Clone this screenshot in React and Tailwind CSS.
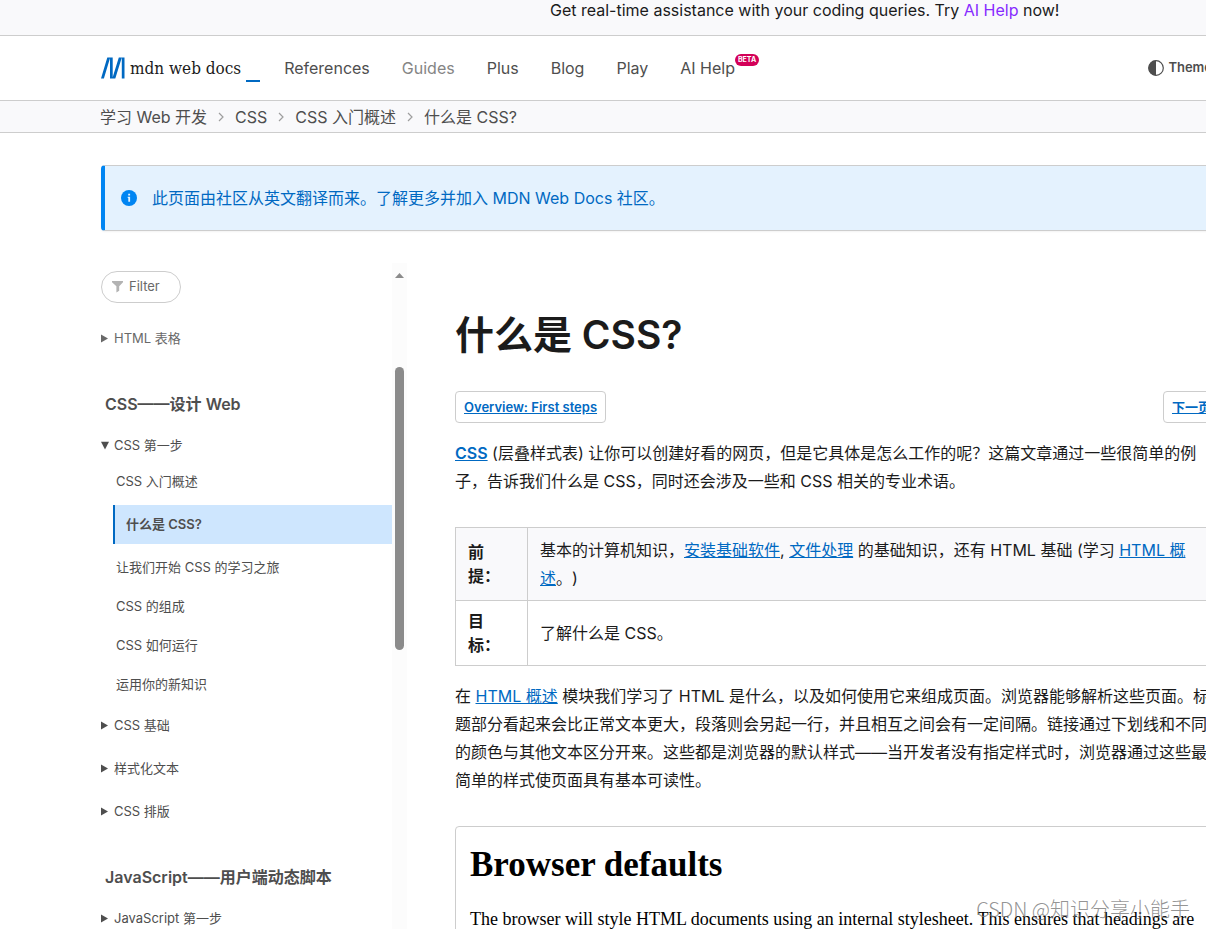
import React, { useState } from 'react';

const navItems = ['References', 'Guides', 'Plus', 'Blog', 'Play'];
const crumbs = ['学习 Web 开发', 'CSS', 'CSS 入门概述', '什么是 CSS?'];

const firstSteps = [
  'CSS 入门概述',
  '什么是 CSS?',
  '让我们开始 CSS 的学习之旅',
  'CSS 的组成',
  'CSS 如何运行',
  '运用你的新知识',
];

const Logo = () => (
  <a href="#home" className="flex items-center text-[#1b1b1b]" aria-label="MDN homepage">
    <svg width="24" height="22" viewBox="0 0 24 22" className="mr-[5px]" fill="#0069c2">
      <path d="M6.3.4h2.9L2.9 21.6H0zM9 .4h2.7v21.2H9zM17.8.4h3L14.3 21.6h-3zM20.8.4h2.7v21.2h-2.7z" />
    </svg>
    <span className="font-['DejaVu_Serif_Condensed','DejaVu_Serif',serif] text-[17px] leading-6">mdn web docs</span>
    <span className="ml-[5px] h-0.5 w-[14px] self-end bg-[#0069c2] translate-y-0.5"></span>
  </a>
);

const Caret = ({ open }) => (
  <svg width="9" height="9" viewBox="0 0 9 9" className="mr-1 shrink-0" fill="currentColor">
    {open ? <path d="M0 .8h8L4 8.6z" /> : <path d="M0 .5v8l7-4z" />}
  </svg>
);

const Section = ({ title, faded, defaultOpen = false, children }) => {
  const [open, setOpen] = useState(defaultOpen);

  return (
    <details open={open} onToggle={(e) => setOpen(e.currentTarget.open)}>
      <summary className={`flex h-[43px] cursor-pointer list-none items-center ${faded ? 'text-[#696969]' : ''}`}>
        <Caret open={open} />
        {title}
      </summary>
      {children}
    </details>
  );
};

const SideHeading = ({ children }) => (
  <h2 className="mt-8 mb-2 pl-1 text-base leading-6 font-semibold">{children}</h2>
);

const Sidebar = () => (
  <aside className="flex w-[306px] shrink-0 text-[13px] text-[#4e4e4e]">
    <div className="min-w-0 flex-1 pt-2">
      <label className="mb-3.5 flex h-8 w-20 items-center rounded-full border border-[#cdcdcd] pl-2.5">
        <svg width="12" height="12" viewBox="0 0 12 12" className="mr-[5px] shrink-0" fill="#b3b3b3" aria-hidden="true">
          <path d="M0 0h11v1.2L7.2 5.2v4.6L4.4 11.6V5.2L0 1.2z" />
        </svg>
        <input
          type="text"
          aria-label="Filter"
          placeholder="Filter"
          className="w-10 bg-transparent outline-none placeholder:text-[#696969]"
        />
      </label>

      <Section title="HTML 表格" faded />

      <SideHeading>CSS——设计 Web</SideHeading>
      <Section title="CSS 第一步" defaultOpen>
        <ul className="-mt-[5px] ml-3">
          {firstSteps.map((item, i) => (
            <li key={item}>
              <a
                href="#step"
                className={
                  i === 1
                    ? 'my-1 flex h-[39px] items-center border-l-2 border-[#0069c2] bg-[#cee6fe] pl-[11px] font-semibold'
                    : 'flex h-[39px] items-center pl-[3px]'
                }
              >
                {item}
              </a>
            </li>
          ))}
        </ul>
      </Section>
      <Section title="CSS 基础" />
      <Section title="样式化文本" />
      <Section title="CSS 排版" />

      <SideHeading>JavaScript——用户端动态脚本</SideHeading>
      <Section title="JavaScript 第一步" />
    </div>

    {/* scrollbar track */}
    <div className="flex w-[15px] flex-col items-center bg-[#fcfcfc] pt-2.5">
      <svg width="9" height="5" viewBox="0 0 9 5" fill="#8b8b8b">
        <path d="M0 5 4.5 0 9 5z" />
      </svg>
      <div className="mt-[89px] h-[283px] w-[9px] rounded-full bg-[#8b8b8b]"></div>
    </div>
  </aside>
);

const TextLink = ({ children }) => (
  <a href="#doc" className="text-[#0069c2] underline">{children}</a>
);

const PagerLink = ({ children }) => (
  <a
    href="#pager"
    className="flex h-8 items-center rounded border border-[#cdcdcd] px-2 text-[13px] font-semibold text-[#0069c2] underline"
  >
    {children}
  </a>
);

const Article = () => (
  <main className="-mr-3.5 ml-12 min-w-0 flex-1 pt-12 leading-7">
    <h1 className="mb-8 text-[39px] leading-12 font-semibold">什么是 CSS?</h1>

    <div className="mb-4 flex justify-between">
      <PagerLink>Overview: First steps</PagerLink>
      <PagerLink>下一页</PagerLink>
    </div>

    <p className="mb-8">
      <a href="#css" className="font-semibold text-[#0069c2] underline">CSS</a>{' '}
      (层叠样式表) 让你可以创建好看的网页，但是它具体是怎么工作的呢？这篇文章通过一些很简单的例子，告诉我们什么是 CSS，同时还会涉及一些和 CSS 相关的专业术语。
    </p>

    <table className="mb-4 w-full table-fixed border-collapse">
      <tbody>
        <tr className="bg-[#f9f9fb]">
          <th scope="row" className="w-[72px] border border-[#cdcdcd] px-3 py-2 text-left leading-6 font-semibold">
            前提：
          </th>
          <td className="border border-[#cdcdcd] px-3 py-2">
            基本的计算机知识，<TextLink>安装基础软件</TextLink>, <TextLink>文件处理</TextLink> 的基础知识，还有 HTML 基础 (学习{' '}
            <TextLink>HTML 概述</TextLink>。)
          </td>
        </tr>
        <tr>
          <th scope="row" className="border border-[#cdcdcd] px-3 py-2 text-left leading-6 font-semibold">
            目标：
          </th>
          <td className="border border-[#cdcdcd] px-3 py-2">了解什么是 CSS。</td>
        </tr>
      </tbody>
    </table>

    <p className="mb-8">
      在 <TextLink>HTML 概述</TextLink>{' '}
      模块我们学习了 HTML 是什么，以及如何使用它来组成页面。浏览器能够解析这些页面。标题部分看起来会比正常文本更大，段落则会另起一行，并且相互之间会有一定间隔。链接通过下划线和不同的颜色与其他文本区分开来。这些都是浏览器的默认样式——当开发者没有指定样式时，浏览器通过这些最简单的样式使页面具有基本可读性。
    </p>

    <div className="rounded border border-[#cdcdcd] px-[14px] py-4 font-['Liberation_Serif',serif] text-black">
      <h2 className="mb-5 text-[35px] leading-11 font-bold">Browser defaults</h2>
      <p className="text-lg leading-6">
        The browser will style HTML documents using an internal stylesheet. This ensures that headings are
      </p>
    </div>
  </main>
);

const App = () => {
  return (
    <div className="relative h-screen overflow-hidden bg-white font-['Inter','Noto_Sans_CJK_SC',sans-serif] text-base text-[#1b1b1b] [text-spacing-trim:space-all]">
      <div className="h-9 overflow-hidden border-b border-[#cdcdcd] bg-[#f9f9fb] pl-[550px] leading-5 whitespace-nowrap">
        Get real-time assistance with your coding queries. Try{' '}
        <a href="#ai" className="text-[#872bff]">AI Help</a> now!
      </div>

      <header className="flex h-[65px] items-center border-b border-[#cdcdcd] pl-[101px] text-[#4e4e4e]">
        <Logo />
        <nav className="ml-6 flex items-center gap-8">
          {navItems.map((item) => (
            <a key={item} href="#nav" className={item === 'Guides' ? 'text-[#858585]' : ''}>
              {item}
            </a>
          ))}
          <a href="#ai" className="relative">
            AI Help
            <span className="absolute -top-0.5 left-full flex h-3 items-center rounded-full bg-[#d30058] px-[3px] text-[7px] font-bold text-white">
              BETA
            </span>
          </a>
        </nav>
        <button type="button" className="-mr-1.5 ml-auto flex shrink-0 items-center gap-1 text-[13px] font-semibold">
          <svg width="16" height="16" viewBox="0 0 16 16">
            <circle cx="8" cy="8" r="7.3" fill="none" stroke="currentColor" strokeWidth="1.2" />
            <path d="M8 .5a7.5 7.5 0 0 0 0 15z" fill="currentColor" />
          </svg>
          Theme
        </button>
      </header>

      <nav className="h-8 border-b border-[#cdcdcd] bg-[#f9f9fb] pl-[100px] text-[#4e4e4e]" aria-label="Breadcrumb">
        <ol className="flex h-full items-center">
          {crumbs.map((crumb, i) => (
            <li key={crumb} className="flex items-center">
              {i > 0 && (
                <svg width="6" height="10" viewBox="0 0 6 10" className="mx-[11px]" fill="none" stroke="#9e9e9e" strokeWidth="1.2">
                  <path d="m1 1 4 4-4 4" />
                </svg>
              )}
              <a href="#crumb">{crumb}</a>
            </li>
          ))}
        </ol>
      </nav>

      <div className="pt-8 pl-[101px]">
        <div className="-mr-3.5 mb-8 flex h-[66px] items-center rounded border border-l-4 border-[#cdcdcd] border-l-[#0085f2] bg-[#e4f2fe] pl-4 text-[#0069c2] shadow-xs">
          <svg width="16" height="16" viewBox="0 0 16 16" className="mr-[15px] shrink-0">
            <circle cx="8" cy="8" r="8" fill="#0085f2" />
            <path d="M7.2 3.7h1.9v1.7H7.2zM6.7 6.7h2.4v5H7.3V8h-.6z" fill="#e4f2fe" />
          </svg>
          <a href="#community">此页面由社区从英文翻译而来。了解更多并加入 MDN Web Docs 社区。</a>
        </div>

        <div className="flex">
          <Sidebar />
          <Article />
        </div>
      </div>

      <div className="pointer-events-none absolute right-4 bottom-1.5 font-['Noto_Sans_CJK_SC',sans-serif] text-[20px] leading-7 font-light text-[#787878]/80">
        CSDN @知识分享小能手
      </div>
    </div>
  );
};

export default App;
